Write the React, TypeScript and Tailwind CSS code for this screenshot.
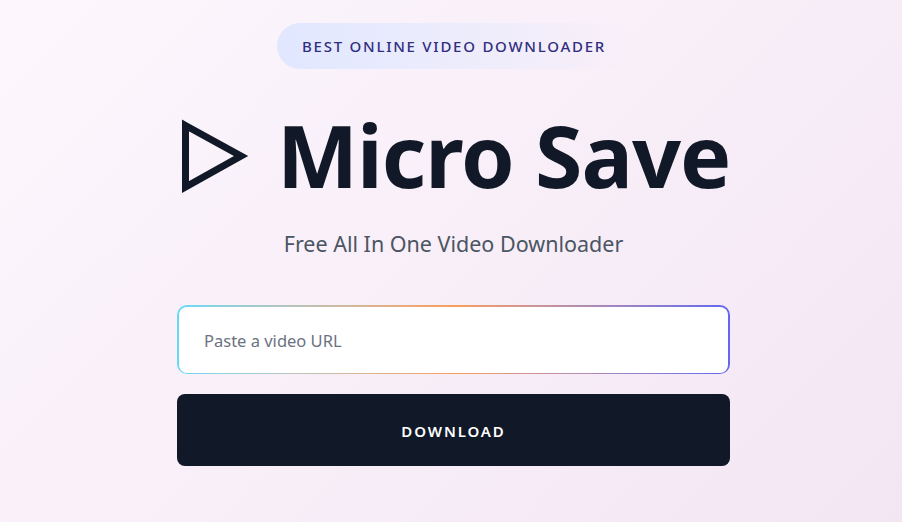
import React from 'react';

export default function App() {
  return (
    <div className="h-[522px] w-full overflow-hidden bg-[linear-gradient(135deg,#fdf7fd_0%,#f3e6f3_100%)] font-['Noto_Sans',sans-serif]">
      <div className="ml-[177px] flex w-[553px] flex-col items-center pt-[23px]">
        {/* Badge */}
        <div className="ml-[100px] flex h-[46px] w-[354px] items-center self-start rounded-full bg-gradient-to-r from-[#e0e7ff] to-transparent pl-[25px]">
          <span className="whitespace-nowrap text-[15px] font-medium tracking-[1.75px] text-[#312e81]">
            BEST ONLINE VIDEO DOWNLOADER
          </span>
        </div>

        {/* Title */}
        <div className="ml-[4px] mt-[43px] flex h-[88px] items-center gap-[28px] self-start">
          <svg width="68" height="74" viewBox="0 0 68 74" fill="none" className="shrink-0">
            <path d="M4.5 6.5 L60 37 L4.5 68 Z" stroke="#111827" strokeWidth="7" strokeLinejoin="miter" />
          </svg>
          <h1 className="whitespace-nowrap pb-[3px] text-[86px] font-bold leading-none tracking-[-1px] text-[#111827]">Micro Save</h1>
        </div>

        <p className="mt-[30px] text-[21.5px] leading-[28px] text-[#4b5563]">Free All In One Video Downloader</p>

        {/* URL input */}
        <div className="mt-[47px] w-full rounded-[10px] bg-gradient-to-r from-[#67d8f5] via-[#fb9d5c] to-[#6366f1] px-[2px] pb-[1px] pt-[2px]">
          <input
            type="text"
            placeholder="Paste a video URL"
            className="block h-[66px] w-full rounded-[8px] bg-white px-[25px] text-[16.5px] text-[#111827] outline-none placeholder:text-[#6b7280]"
          />
        </div>

        <button className="mt-[20px] h-[72px] w-full rounded-[8px] bg-[#111827] pt-[2px] text-[15px] font-semibold tracking-[1.9px] text-white">
          DOWNLOAD
        </button>
      </div>
    </div>
  );
}
